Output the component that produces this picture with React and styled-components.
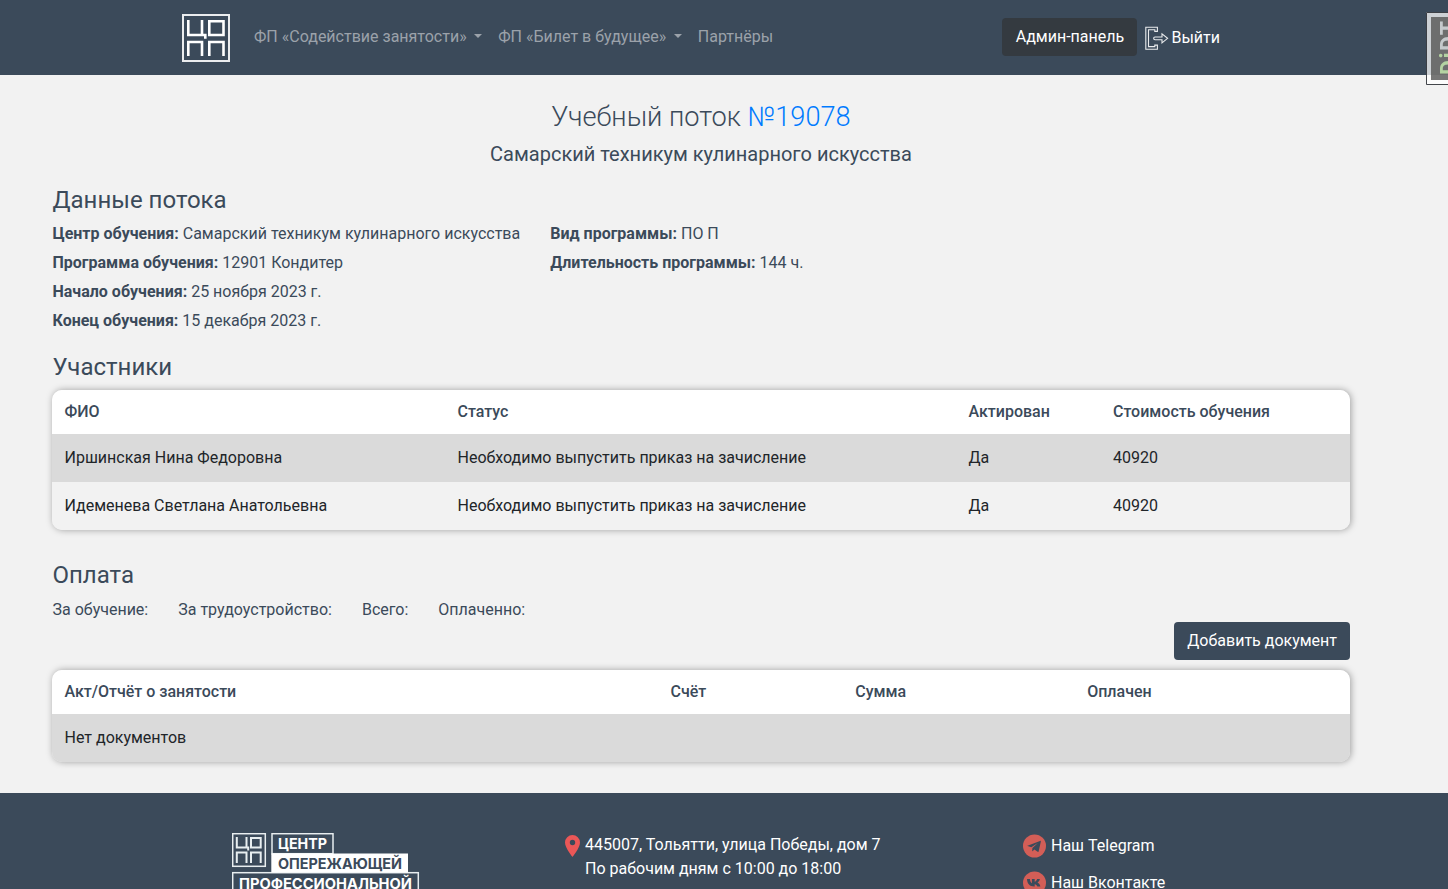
import React from 'react';
import styled, { createGlobalStyle } from 'styled-components';

const navy = '#3b4a5a';

const GlobalStyle = createGlobalStyle`
  *, *::before, *::after { box-sizing: border-box; }
  html, body { margin: 0; height: 100%; overflow: hidden; }
  body {
    background: #f2f2f2;
    color: ${navy};
    font: 400 16px/24px Roboto, "Liberation Sans", sans-serif;
  }
  a { color: inherit; text-decoration: none; }
`;

const Page = styled.div`
  height: 889px;
  overflow: hidden;
`;

const Header = styled.header`
  display: flex;
  align-items: center;
  height: 75px;
  padding: 0 228px 0 182px;
  background: ${navy};
`;

const Brand = styled.a`
  display: flex;
  margin-right: 24px;
`;

const Nav = styled.nav`
  display: flex;
  gap: 16px;
  flex: 1;
  margin-top: -1px;
`;

const NavLink = styled.a`
  display: flex;
  align-items: center;
  color: #9ba2aa;
  white-space: nowrap;
`;

const Caret = styled.span`
  margin: -2px 0 0 7.6px;
  border: 4.8px solid transparent;
  border-top-color: currentColor;
  border-bottom: 0;
`;

const Button = styled.button`
  height: 38px;
  padding: 6px 13px;
  border: 0;
  border-radius: 4px;
  background: ${({ $dark }) => ($dark ? '#343a40' : navy)};
  color: #fff;
  font: inherit;
  white-space: nowrap;
`;

const AdminButton = styled(Button)`
  width: 135px;
`;

const Account = styled.div`
  display: flex;
  align-items: center;
  gap: 8px;
  margin-top: -1px;
`;

const Logout = styled.a`
  display: flex;
  align-items: center;
  gap: 2px;
  color: #fff;
  padding-top: 2px;
`;

const DebugHandle = styled.aside`
  position: fixed;
  top: 12px;
  left: 1426px;
  width: 40px;
  height: 73px;
`;

const Main = styled.main`
  height: 718px;
  padding: 25px 98px 0 52px;
`;

const Title = styled.h1`
  margin: 0 0 8px;
  font-size: 27.2px;
  font-weight: 300;
  line-height: 34px;
  text-align: center;
  a { color: #007bff; }
`;

const Subtitle = styled.h2`
  margin: 0 0 20px;
  font-size: 20px;
  font-weight: 400;
  line-height: 24px;
  text-align: center;
`;

const SectionTitle = styled.h3`
  margin: 0 0 ${({ $gap }) => $gap}px;
  padding-left: 0.5px;
  font-size: 24px;
  font-weight: 400;
  line-height: 29px;
`;

const Details = styled.div`
  display: flex;
  gap: 30px;
  margin-bottom: 20px;
  padding-left: 0.5px;
`;

const DetailList = styled.div`
  display: flex;
  flex-direction: column;
  gap: 5px;
`;

const Label = styled.span`
  font-weight: 700;
`;

const Table = styled.div`
  overflow: hidden;
  margin-bottom: ${({ $gap }) => $gap || 0}px;
  border-radius: 10px;
  box-shadow: 1px 0 7px rgba(0, 0, 0, 0.35);
`;

const Row = styled.div`
  display: grid;
  grid-template-columns: ${({ $columns }) => $columns};
  align-items: center;
  height: 48px;
  padding-left: 12.5px;
  background: ${({ $striped }) => ($striped ? '#dadada' : '#f2f2f2')};
  color: #212529;
`;

const HeadRow = styled(Row)`
  height: 44px;
  background: #fff;
  color: ${navy};
  font-weight: 500;
`;

const Totals = styled.div`
  display: flex;
  gap: 30px;
  padding-left: 0.5px;
`;

const Actions = styled.div`
  display: flex;
  justify-content: flex-end;
  margin-bottom: 10px;
`;

const Footer = styled.footer`
  display: grid;
  grid-template-columns: 332px 459px 1fr;
  align-items: start;
  height: 96px;
  padding: 40px 0 0 232px;
  overflow: hidden;
  background: ${navy};
  color: #fff;
`;

const Address = styled.div`
  display: flex;
  gap: 4px;
  svg { margin-top: 1px; }
`;

const Socials = styled.div`
  display: flex;
  flex-direction: column;
  gap: 13px;
  padding-top: 1px;
`;

const Social = styled.a`
  display: flex;
  align-items: center;
  gap: 5px;
  svg { margin-top: -1px; }
`;

const LogoMark = ({ size }) => (
  <svg width={size} height={size} viewBox="0 0 48 48" fill="none" stroke="#fff">
    <rect x="1" y="1" width="46" height="46" strokeWidth="2" strokeOpacity=".9" />
    <path d="M6.3 6v15h17v3.700M20 6v15M27.300 7.300h14.200V21H27.300zM6.300 42V28H20V42M27.300 42V28h14.200V42" strokeWidth="2.600" />
  </svg>
);

const LogoutIcon = () => (
  <svg width="24" height="25" viewBox="0 0 24 25" fill="none" stroke="#e9ebed" strokeWidth="1.100">
    <path d="M12.400 5.400V1.200H.8v22h11.600v-4.100H9.800v1.500H3.500V3.800h6.300v1.600z" />
    <path d="M10 11h7V7.800l5.600 4.500-5.600 4.600v-3.200h-7a1.300 1.300 0 0 1 0-2.700z" />
  </svg>
);

const PinIcon = () => (
  <svg width="17" height="24" viewBox="0 0 17 24">
    <path fill="#eb5757" fillRule="evenodd" d="M8.500 1A7.500 7.500 0 0 0 1 8.500C1 14 8.500 23 8.500 23S16 14 16 8.500A7.500 7.500 0 0 0 8.500 1zm0 4.800a2.700 2.700 0 1 1 0 5.400 2.700 2.700 0 0 1 0-5.400z" />
  </svg>
);

const TelegramIcon = () => (
  <svg width="23" height="24" viewBox="0 0 23 24">
    <circle cx="11.500" cy="12" r="11.500" fill="#d35e57" />
    <path fill={navy} d="M4.500 11.700 17 6.900c.6-.2 1 .1.800.9l-2.100 9.500c-.1.700-.6.800-1.100.5l-3.200-2.300-1.600 1.500c-.3.300-.6.200-.6-.2l.2-2.800 5.500-5-6.600 4.300-3.700-1.200c-.5-.1-.5-.3-.1-.4z" />
  </svg>
);

const VkIcon = () => (
  <svg width="23" height="24" viewBox="0 0 23 24">
    <circle cx="11.500" cy="12" r="11.500" fill="#d35e57" />
    <path fill={navy} d="M4 8h2.900c.3 2.600 1.200 3.900 2 4.200V8h2.800v2.700c1-.2 2-1.300 2.400-2.700h2.800c-.4 1.700-1.500 3-2.400 3.600 1 .5 2.300 1.500 2.900 3.900h-3c-.5-1.300-1.400-2.100-2.700-2.300v2.300h-.4C6.700 15.500 4.200 12.800 4 8z" />
  </svg>
);

const FooterLogo = () => (
  <svg width="190" height="60" viewBox="0 0 190 60" fontFamily="Inter, sans-serif" fontWeight="700" fontSize="14.300">
    <g fill="none" stroke="#e8eef0" strokeWidth="1.500">
      <rect x=".7" y=".7" width="32.600" height="32.600" />
      <path strokeWidth="2" d="M4.800 4v10.500h11.400v3M14.500 4v10.500M19 5h9.700v9.500H19zM4.800 30V19.500h9.700V30M19 30V19.500h9.700V30" />
      <rect x="40" y=".7" width="61" height="20" />
      <rect x=".7" y="39.700" width="185.600" height="21" />
    </g>
    <path fill="#fff" d="M39.300 20.500H176V39.500H39.300z" />
    <text x="46" y="16" fill="#fff" textLength="49" lengthAdjust="spacingAndGlyphs">ЦЕНТР</text>
    <text x="46" y="36" fill={navy} textLength="124" lengthAdjust="spacingAndGlyphs">ОПЕРЕЖАЮЩЕЙ</text>
    <text x="7" y="55.700" fill="#fff" textLength="173" lengthAdjust="spacingAndGlyphs">ПРОФЕССИОНАЛЬНОЙ</text>
  </svg>
);

const participantColumns = '393px 511px 144.500px 1fr';
const paymentColumns = '606px 184.700px 232px 1fr';

const participants = ['Иршинская Нина Федоровна', 'Идеменева Светлана Анатольевна'];

const Detail = ({ label, children }) => (
  <div><Label>{label}:</Label> {children}</div>
);

export default function App() {
  return (
    <Page>
      <GlobalStyle />
      <Header>
        <Brand href="#"><LogoMark size={48} /></Brand>
        <Nav>
          <NavLink href="#">ФП «Содействие занятости»<Caret /></NavLink>
          <NavLink href="#">ФП «Билет в будущее»<Caret /></NavLink>
          <NavLink href="#">Партнёры</NavLink>
        </Nav>
        <Account>
          <AdminButton $dark>Админ-панель</AdminButton>
          <Logout href="#"><LogoutIcon />Выйти</Logout>
        </Account>
      </Header>
      <Main>
        <Title>Учебный поток <a href="#">№19078</a></Title>
        <Subtitle>Самарский техникум кулинарного искусства</Subtitle>
        <SectionTitle $gap={7}>Данные потока</SectionTitle>
        <Details>
          <DetailList>
            <Detail label="Центр обучения">Самарский техникум кулинарного искусства</Detail>
            <Detail label="Программа обучения">12901 Кондитер</Detail>
            <Detail label="Начало обучения">25 ноября 2023 г.</Detail>
            <Detail label="Конец обучения">15 декабря 2023 г.</Detail>
          </DetailList>
          <DetailList>
            <Detail label="Вид программы">ПО П</Detail>
            <Detail label="Длительность программы">144 ч.</Detail>
          </DetailList>
        </Details>
        <SectionTitle $gap={8}>Участники</SectionTitle>
        <Table $gap={31}>
          <HeadRow $columns={participantColumns}>
            <span>ФИО</span><span>Статус</span><span>Актирован</span><span>Стоимость обучения</span>
          </HeadRow>
          {participants.map((name, i) => (
            <Row key={name} $columns={participantColumns} $striped={i % 2 === 0}>
              <span>{name}</span><span>Необходимо выпустить приказ на зачисление</span><span>Да</span><span>40920</span>
            </Row>
          ))}
        </Table>
        <SectionTitle $gap={8}>Оплата</SectionTitle>
        <Totals>
          <span>За обучение:</span><span>За трудоустройство:</span><span>Всего:</span><span>Оплаченно:</span>
        </Totals>
        <Actions><Button>Добавить документ</Button></Actions>
        <Table>
          <HeadRow $columns={paymentColumns}>
            <span>Акт/Отчёт о занятости</span><span>Счёт</span><span>Сумма</span><span>Оплачен</span>
          </HeadRow>
          <Row $columns="1fr" $striped><span>Нет документов</span></Row>
        </Table>
      </Main>
      <Footer>
        <FooterLogo />
        <Address>
          <PinIcon />
          <div>445007, Тольятти, улица Победы, дом 7<br />По рабочим дням с 10:00 до 18:00</div>
        </Address>
        <Socials>
          <Social href="#"><TelegramIcon />Наш Telegram</Social>
          <Social href="#"><VkIcon />Наш Вконтакте</Social>
        </Socials>
      </Footer>
      <DebugHandle>
        <svg width="40" height="73" viewBox="0 0 40 73">
          <path fill="#fff" fillOpacity=".75" d="M0 0h40v73H0z" />
          <path fill="#555" fillOpacity=".8" d="M5 5h35v63H5z" />
          <path fill="none" stroke="#22262b" strokeOpacity=".85" d="M.5.5h39v72H.5z" />
          <text transform="translate(31 63) rotate(-90)" fontFamily="Roboto, sans-serif" fontWeight="700" fontSize="23" fill="#c5c9cc" textLength="54">
            <tspan fill="#b4d3a2">Dj</tspan>DT
          </text>
        </svg>
      </DebugHandle>
    </Page>
  );
}
